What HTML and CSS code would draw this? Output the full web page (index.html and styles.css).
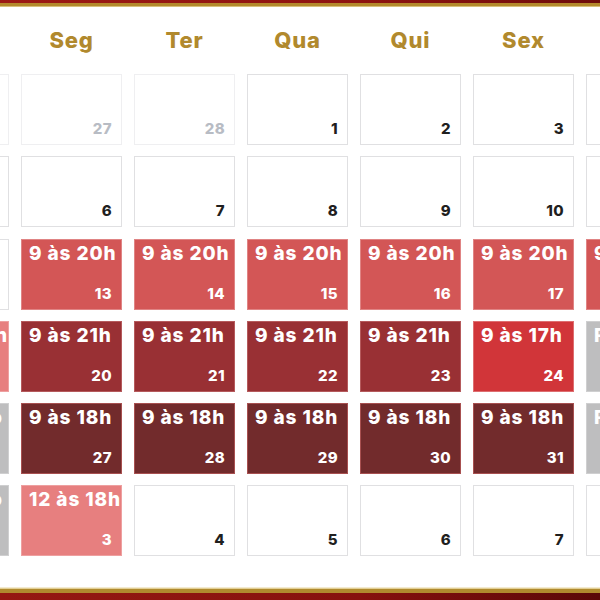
FILE: index.html
```html
<!DOCTYPE html>
<html lang="pt-BR">
<head>
<meta charset="utf-8">
<title>Calendário</title>
<link rel="stylesheet" href="styles.css">
</head>
<body>
<div class="bar-top"></div>
<main class="cal">
  <div class="week-head">
    <div class="wd">Dom</div>
    <div class="wd">Seg</div>
    <div class="wd">Ter</div>
    <div class="wd">Qua</div>
    <div class="wd">Qui</div>
    <div class="wd">Sex</div>
    <div class="wd">Sáb</div>
  </div>
  <div class="grid">
    <div class="day faded"><span class="hours"></span><span class="num">26</span></div>
    <div class="day faded"><span class="hours"></span><span class="num">27</span></div>
    <div class="day faded"><span class="hours"></span><span class="num">28</span></div>
    <div class="day"><span class="hours"></span><span class="num">1</span></div>
    <div class="day"><span class="hours"></span><span class="num">2</span></div>
    <div class="day"><span class="hours"></span><span class="num">3</span></div>
    <div class="day"><span class="hours"></span><span class="num">4</span></div>

    <div class="day"><span class="hours"></span><span class="num">5</span></div>
    <div class="day"><span class="hours"></span><span class="num">6</span></div>
    <div class="day"><span class="hours"></span><span class="num">7</span></div>
    <div class="day"><span class="hours"></span><span class="num">8</span></div>
    <div class="day"><span class="hours"></span><span class="num">9</span></div>
    <div class="day"><span class="hours"></span><span class="num">10</span></div>
    <div class="day"><span class="hours"></span><span class="num">11</span></div>

    <div class="day"><span class="hours"></span><span class="num">12</span></div>
    <div class="day red"><span class="hours">9 às 20h</span><span class="num">13</span></div>
    <div class="day red"><span class="hours">9 às 20h</span><span class="num">14</span></div>
    <div class="day red"><span class="hours">9 às 20h</span><span class="num">15</span></div>
    <div class="day red"><span class="hours">9 às 20h</span><span class="num">16</span></div>
    <div class="day red"><span class="hours">9 às 20h</span><span class="num">17</span></div>
    <div class="day red"><span class="hours">9 às 20h</span><span class="num">18</span></div>

    <div class="day pink"><span class="hours">12 às 18h</span><span class="num">19</span></div>
    <div class="day wine"><span class="hours">9 às 21h</span><span class="num">20</span></div>
    <div class="day wine"><span class="hours">9 às 21h</span><span class="num">21</span></div>
    <div class="day wine"><span class="hours">9 às 21h</span><span class="num">22</span></div>
    <div class="day wine"><span class="hours">9 às 21h</span><span class="num">23</span></div>
    <div class="day bright"><span class="hours">9 às 17h</span><span class="num">24</span></div>
    <div class="day closed"><span class="hours">Fechado</span><span class="num">25</span></div>

    <div class="day closed"><span class="hours">Fechado</span><span class="num">26</span></div>
    <div class="day dark"><span class="hours">9 às 18h</span><span class="num">27</span></div>
    <div class="day dark"><span class="hours">9 às 18h</span><span class="num">28</span></div>
    <div class="day dark"><span class="hours">9 às 18h</span><span class="num">29</span></div>
    <div class="day dark"><span class="hours">9 às 18h</span><span class="num">30</span></div>
    <div class="day dark"><span class="hours">9 às 18h</span><span class="num">31</span></div>
    <div class="day closed"><span class="hours">Fechado</span><span class="num">1</span></div>

    <div class="day closed"><span class="hours">Fechado</span><span class="num">2</span></div>
    <div class="day pink"><span class="hours">12 às 18h</span><span class="num">3</span></div>
    <div class="day"><span class="hours"></span><span class="num">4</span></div>
    <div class="day"><span class="hours"></span><span class="num">5</span></div>
    <div class="day"><span class="hours"></span><span class="num">6</span></div>
    <div class="day"><span class="hours"></span><span class="num">7</span></div>
    <div class="day"><span class="hours"></span><span class="num">8</span></div>
  </div>
</main>
<div class="bar-bottom"></div>
</body>
</html>
```

FILE: styles.css
```css
html, body {
  margin: 0;
  padding: 0;
}
body {
  width: 600px;
  height: 600px;
  overflow: hidden;
  background: #ffffff;
  font-family: "Inter", "Noto Sans", sans-serif;
  display: flex;
  flex-direction: column;
}
.bar-top {
  height: 7px;
  flex: none;
  background:
    linear-gradient(to bottom, transparent 0 3px, #b38a2c 3px 6px, #d8c07a 6px 7px),
    linear-gradient(to right, #9c1a14, #8e1410 60%, #6e0c0a);
}
.bar-bottom {
  margin-top: auto;
  height: 13px;
  flex: none;
  background:
    linear-gradient(to bottom, #f3ead0 0 1px, #e2cf95 1px 2px, #b08a2e 2px 6px, transparent 6px),
    linear-gradient(to right, #951812, #86110e 60%, #5a0808);
}
.cal {
  margin-left: -92px;
  width: 779px;
  flex: none;
}
.week-head {
  display: grid;
  grid-template-columns: repeat(7, 101px);
  column-gap: 12px;
  padding-top: 20px;
  height: 47px;
}
.wd {
  text-align: center;
  font-size: 22px;
  line-height: 26px;
  font-weight: 800;
  letter-spacing: 0.8px;
  color: #b1892d;
}
.grid {
  display: grid;
  grid-template-columns: repeat(7, 101px);
  grid-auto-rows: 71px;
  column-gap: 12px;
  row-gap: 11.25px;
}
.day {
  box-sizing: border-box;
  border: 1px solid #e0e0e2;
  background: #ffffff;
  display: flex;
  flex-direction: column;
  justify-content: space-between;
  padding: 2px 9px 7px 7px;
  color: #ffffff;
}
.hours {
  font-size: 19px;
  line-height: 23px;
  font-weight: 800;
  letter-spacing: 0.9px;
  white-space: nowrap;
  min-height: 23px;
}
.num {
  align-self: flex-end;
  font-size: 15px;
  line-height: 16px;
  font-weight: 800;
  letter-spacing: 0.4px;
  color: #1f1f1f;
}
.faded {
  border-color: #efeff1;
}
.faded .num {
  color: #b8bcc4;
}
.red {
  background: #d35656;
  border-color: #e08484;
}
.wine {
  background: #993034;
  border-color: #b55a5c;
}
.bright {
  background: #d13539;
  border-color: #de6e70;
}
.dark {
  background: #722b2c;
  border-color: #a85050;
}
.pink {
  background: #e77f7f;
  border-color: #eea0a0;
}
.closed {
  background: #bebebf;
  border-color: #cfcfd0;
}
.red .num, .wine .num, .bright .num, .dark .num, .pink .num, .closed .num {
  color: #ffffff;
}
```
